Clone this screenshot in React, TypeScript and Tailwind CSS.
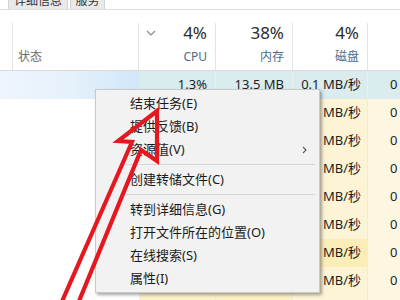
import React from 'react';

const FONT = "font-['Noto_Sans','Noto_Sans_CJK_SC',sans-serif]";

type Row = {
  cpu: string;
  mem: string;
  disk: string;
  net: string;
  diskBg: string;
};

// cpu / mem cells of rows 2-8 sit under the context menu, so they stay empty
const rows: Row[] = [
  { cpu: '', mem: '', disk: '0 MB/秒', net: '0', diskBg: 'bg-[#fdf4d6]' },
  { cpu: '', mem: '', disk: '0 MB/秒', net: '0', diskBg: 'bg-[#fdf4d6]' },
  { cpu: '', mem: '', disk: '0 MB/秒', net: '0', diskBg: 'bg-[#fdf4d6]' },
  { cpu: '', mem: '', disk: '0 MB/秒', net: '0', diskBg: 'bg-[#fdf4d6]' },
  { cpu: '', mem: '', disk: '0 MB/秒', net: '0', diskBg: 'bg-[#fdf4d6]' },
  { cpu: '', mem: '', disk: '0 MB/秒', net: '0', diskBg: 'bg-[#fbedb8]' },
  { cpu: '', mem: '', disk: '0 MB/秒', net: '0', diskBg: 'bg-[#fdf4d6]' },
  { cpu: '0%', mem: '2.7 MB', disk: '0 MB/秒', net: '0', diskBg: 'bg-[#fdf4d6]' },
];

type Item = { label: string; sub?: boolean } | 'sep';

const menu: Item[] = [
  { label: '结束任务(E)' },
  { label: '提供反馈(B)' },
  { label: '资源值(V)', sub: true },
  'sep',
  { label: '创建转储文件(C)' },
  'sep',
  { label: '转到详细信息(G)' },
  { label: '打开文件所在的位置(O)' },
  { label: '在线搜索(S)' },
  { label: '属性(I)' },
];

function HeaderCol({ big, small, sort, w }: { big: string; small: string; sort?: boolean; w: string }) {
  return (
    <div className={`${w} shrink-0 h-full border-r border-[#e3e3e3] flex flex-col pr-[8px]`}>
      <div className="flex justify-between items-start">
        {sort ? (
          <svg width="10" height="6" viewBox="0 0 10 6" className="ml-[7px] mt-[7px]">
            <path d="M1 1 L5 5 L9 1" fill="none" stroke="#8a8a8a" strokeWidth="1.2" />
          </svg>
        ) : (
          <span />
        )}
        <span className="text-[17px] leading-[20px] text-[#2b2b2b]">{big}</span>
      </div>
      <span className="self-end mt-[6px] text-[12px] leading-[16px] text-[#4f6b88]">{small}</span>
    </div>
  );
}

export default function App() {
  return (
    <div className={`relative w-[400px] h-[300px] overflow-hidden bg-white ${FONT}`}>
      {/* tabs, cut off at the top */}
      <div className="h-[10px] flex items-start gap-[2px] pl-[8px] border-b border-[#dedede]">
        <div className="h-[9px] w-[60px] overflow-hidden bg-[#e9e9e9] border-x border-[#d2d2d2] flex justify-center">
          <span className="block -mt-[6px] text-[12px] leading-[14px] text-[#333]">详细信息</span>
        </div>
        <div className="h-[9px] w-[35px] overflow-hidden bg-[#e9e9e9] border-x border-[#d2d2d2] flex justify-center">
          <span className="block -mt-[6px] text-[12px] leading-[14px] text-[#333]">服务</span>
        </div>
      </div>

      {/* column header */}
      <div className="pt-[13px] border-b border-[#d9d9d9]">
        <div className="flex h-[47px]">
          <div className="w-[13px] shrink-0 border-r border-[#e3e3e3]" />
          <div className="w-[126px] shrink-0 border-r border-[#e3e3e3] pl-[5px] pt-[26px] text-[12px] leading-[16px] text-[#6a6a6a]">
            状态
          </div>
          <HeaderCol w="w-[77px]" big="4%" small="CPU" sort />
          <HeaderCol w="w-[77px]" big="38%" small="内存" />
          <HeaderCol w="w-[75px]" big="4%" small="磁盘" />
          <div className="flex-1" />
        </div>
      </div>

      {/* selected row */}
      <div className="flex h-[28px] text-[13px] text-[#1e1e1e]">
        <div className="w-[139px] shrink-0 bg-linear-to-r from-[#eef5fc] via-[#e6f1fb] to-[#d2e7f8]" />
        <div className="w-[77px] shrink-0 bg-[#dbecee] border-r border-[#e6f1f2] flex items-center justify-end pr-[8px]">1.3%</div>
        <div className="w-[77px] shrink-0 bg-[#dbecee] border-r border-[#e6f1f2] flex items-center justify-end pr-[8px]">13.5 MB</div>
        <div className="w-[75px] shrink-0 bg-[#dbecee] border-r border-[#e6f1f2] flex items-center justify-end pr-[6px]">0.1 MB/秒</div>
        <div className="flex-1 bg-[#dbecee] flex items-center pl-[22px]">0</div>
      </div>

      {rows.map((r, i) => (
        <div key={i} className="flex h-[28px] text-[13px] text-[#1e1e1e]">
          <div className="w-[139px] shrink-0 bg-white" />
          <div className="w-[77px] shrink-0 bg-[#fcf2c9] border-r border-[#f4ead0] flex items-center justify-end pr-[8px]">{r.cpu}</div>
          <div className="w-[77px] shrink-0 bg-[#fcf1c6] border-r border-[#f4ead0] flex items-center justify-end pr-[8px]">{r.mem}</div>
          <div className={`w-[75px] shrink-0 ${r.diskBg} border-r border-[#f1ead6] flex items-center justify-end pr-[6px]`}>{r.disk}</div>
          <div className="flex-1 bg-[#fdf7e2] flex items-center pl-[22px]">{r.net}</div>
        </div>
      ))}

      {/* context menu */}
      <div className="absolute left-[95px] top-[89px] w-[225px] bg-[#f2f2f2] border border-[#c9c9c9] shadow-[2px_2px_3px_rgba(0,0,0,0.35)] py-[2px] text-[13px] text-[#1a1a1a]">
        {menu.map((m, i) =>
          m === 'sep' ? (
            <div key={i} className="h-[7px] flex items-center">
              <div className="ml-[30px] mr-[4px] h-px flex-1 bg-[#d6d6d6]" />
            </div>
          ) : (
            <div key={i} className="h-[23px] flex items-center pl-[34px]">
              <span>{m.label}</span>
              {m.sub && (
                <svg width="5" height="8" viewBox="0 0 5 8" className="ml-auto mr-[12px]">
                  <path d="M1 1 L4 4 L1 7" fill="none" stroke="#5a5a5a" strokeWidth="1.1" />
                </svg>
              )}
            </div>
          )
        )}
      </div>

      {/* red arrow annotation */}
      <svg className="absolute left-0 top-0 pointer-events-none" width="400" height="300" viewBox="0 0 400 300">
        <polygon
          points="157,111 118,141 132,142 60,306 77,306 141,150 157,161"
          fill="none"
          stroke="#e5171f"
          strokeWidth="4.2"
          strokeLinejoin="miter"
        />
      </svg>
    </div>
  );
}
